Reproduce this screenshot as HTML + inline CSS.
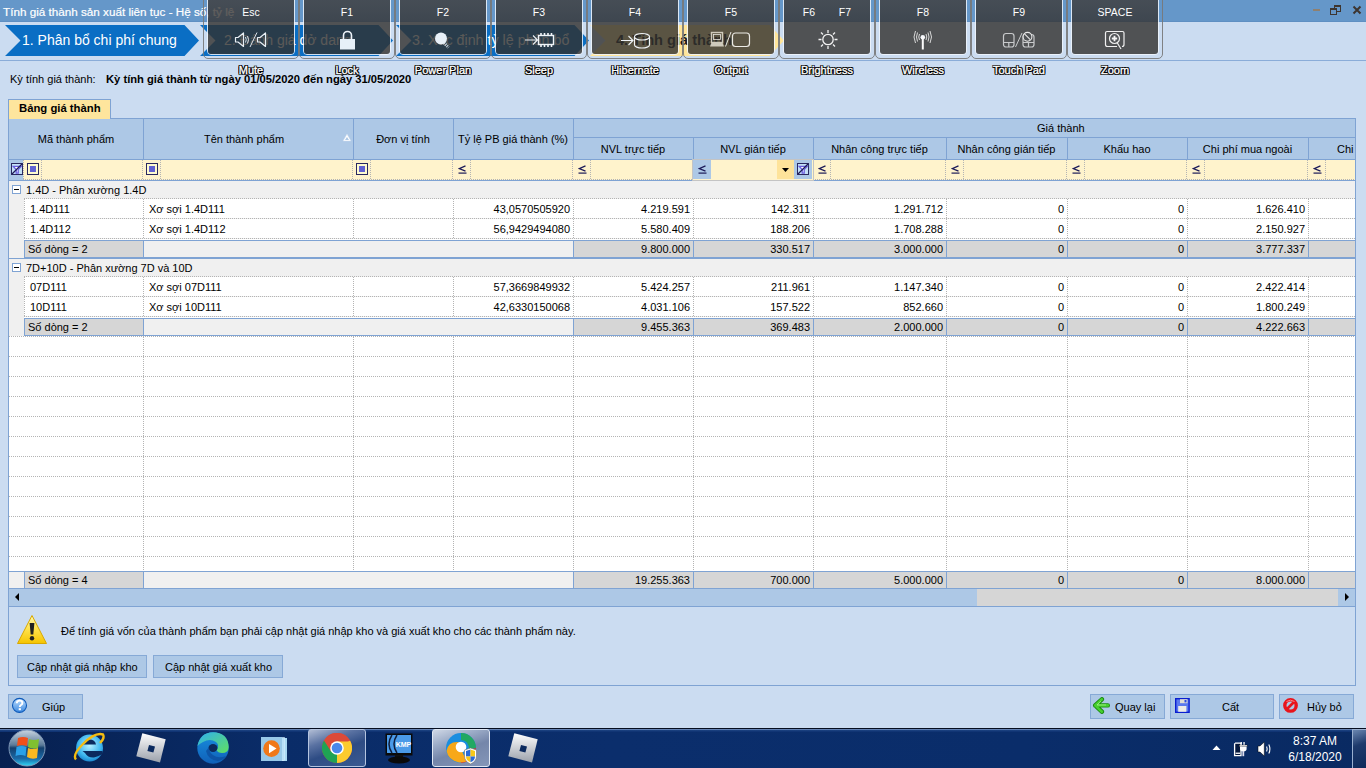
<!DOCTYPE html><html><head><meta charset="utf-8"><style>
html,body{margin:0;padding:0;}
body{width:1366px;height:768px;overflow:hidden;position:relative;background:#cbdcf1;font-family:"Liberation Sans", sans-serif;}
div{box-sizing:border-box;}
</style></head><body>
<div style="position:absolute;left:0px;top:0px;width:1366px;height:22px;background:#6597c9"></div>
<div style="position:absolute;left:0px;top:21px;width:1366px;height:1px;background:#5f8fc2"></div>
<div style="position:absolute;left:3px;top:6px;font-size:11.7px;line-height:11.7px;height:11.7px;color:#fff;font-weight:normal;white-space:nowrap;-webkit-text-stroke:0.2px #fff">Tính giá thành sản xuất liên tục - Hệ số, tỷ lệ</div>
<div style="position:absolute;left:1313px;top:9px;width:7px;height:2px;background:#8f8070"></div>
<div style="position:absolute;left:1334px;top:5px;width:7px;height:7px;border:1px solid #3d3530;border-top-width:2px"></div>
<div style="position:absolute;left:1330px;top:8px;width:7px;height:7px;border:1px solid #3d3530;border-top-width:2px;background:#6597c9"></div>
<svg style="position:absolute;left:1352px;top:5px" width="10" height="10"><path d="M1.5 1.5 L8.5 8.5 M8.5 1.5 L1.5 8.5" stroke="#3d3530" stroke-width="2"/></svg>
<svg style="position:absolute;left:0;top:0" width="1366" height="60"><polygon points="5,25 184.5,25 199,40.5 184.5,56 5,56 20.5,40.5" fill="#0a6ec4"/><polygon points="200,25 378.5,25 393,40.5 378.5,56 200,56 215.5,40.5" fill="#0a6ec4"/><polygon points="396,25 574.5,25 589,40.5 574.5,56 396,56 411.5,40.5" fill="#0a6ec4"/><polygon points="590,25 769.5,25 784,40.5 769.5,56 590,56 605.5,40.5" fill="#ffe59a"/></svg>
<div style="position:absolute;left:22px;top:33px;font-size:14px;line-height:14px;height:14px;color:#fff;font-weight:normal;white-space:nowrap;">1. Phân bổ chi phí chung</div>
<div style="position:absolute;left:224px;top:33px;font-size:14px;line-height:14px;height:14px;color:#fff;font-weight:normal;white-space:nowrap;">2. Đánh giá dở dang</div>
<div style="position:absolute;left:412px;top:33px;font-size:14.3px;line-height:14.3px;height:14.3px;color:#fff;font-weight:normal;white-space:nowrap;">3. Xác định tỷ lệ phân bổ</div>
<div style="position:absolute;left:616px;top:33px;font-size:14.6px;line-height:14.6px;height:14.6px;color:#1a1a1a;font-weight:bold;white-space:nowrap;">4. Tính giá thành</div>
<div style="position:absolute;left:0px;top:60px;width:1366px;height:1px;background:#8aacd8"></div>
<div style="position:absolute;left:10px;top:74px;font-size:11px;line-height:11px;height:11px;color:#000;font-weight:normal;white-space:nowrap;">Kỳ tính giá thành:</div>
<div style="position:absolute;left:106px;top:74px;font-size:11.2px;line-height:11.2px;height:11.2px;color:#000;font-weight:bold;white-space:nowrap;">Kỳ tính giá thành từ ngày 01/05/2020 đến ngày 31/05/2020</div>
<div style="position:absolute;left:8px;top:99px;width:103px;height:20px;background:#fee59d;border:1px solid #7fa3d3;border-bottom:none"></div>
<div style="position:absolute;left:19px;top:103px;font-size:11.3px;line-height:11.3px;height:11.3px;color:#000;font-weight:bold;white-space:nowrap;">Bảng giá thành</div>
<div style="position:absolute;left:8px;top:119px;width:1348px;height:567px;border:1px solid #7fa3d3;border-top:none"></div>
<div style="position:absolute;left:110px;top:118px;width:1246px;height:1px;background:#7fa3d3"></div>
<div style="position:absolute;left:9px;top:119px;width:1346px;height:40px;background:#adc8e6"></div>
<div style="position:absolute;left:143px;top:119px;width:1px;height:40px;background:#7fa3d3"></div>
<div style="position:absolute;left:353px;top:119px;width:1px;height:40px;background:#7fa3d3"></div>
<div style="position:absolute;left:453px;top:119px;width:1px;height:40px;background:#7fa3d3"></div>
<div style="position:absolute;left:573px;top:119px;width:1px;height:40px;background:#7fa3d3"></div>
<div style="position:absolute;left:573px;top:137px;width:782px;height:1px;background:#7fa3d3"></div>
<div style="position:absolute;left:693px;top:137px;width:1px;height:22px;background:#7fa3d3"></div>
<div style="position:absolute;left:813px;top:137px;width:1px;height:22px;background:#7fa3d3"></div>
<div style="position:absolute;left:946px;top:137px;width:1px;height:22px;background:#7fa3d3"></div>
<div style="position:absolute;left:1067px;top:137px;width:1px;height:22px;background:#7fa3d3"></div>
<div style="position:absolute;left:1187px;top:137px;width:1px;height:22px;background:#7fa3d3"></div>
<div style="position:absolute;left:1308px;top:137px;width:1px;height:22px;background:#7fa3d3"></div>
<div style="position:absolute;left:9px;top:159px;width:1346px;height:1px;background:#7fa3d3"></div>
<div style="position:absolute;left:9px;top:134px;width:134px;text-align:center;font-size:11px;line-height:11px;height:11px;color:#000;font-weight:normal;white-space:nowrap;">Mã thành phẩm</div>
<div style="position:absolute;left:143px;top:134px;width:202px;text-align:center;font-size:11px;line-height:11px;height:11px;color:#000;font-weight:normal;white-space:nowrap;">Tên thành phẩm</div>
<div style="position:absolute;left:353px;top:134px;width:100px;text-align:center;font-size:11px;line-height:11px;height:11px;color:#000;font-weight:normal;white-space:nowrap;">Đơn vị tính</div>
<div style="position:absolute;left:453px;top:134px;width:120px;text-align:center;font-size:11px;line-height:11px;height:11px;color:#000;font-weight:normal;white-space:nowrap;">Tỷ lệ PB giá thành (%)</div>
<div style="position:absolute;left:1037px;top:123px;font-size:11px;line-height:11px;height:11px;color:#000;font-weight:normal;white-space:nowrap;">Giá thành</div>
<div style="position:absolute;left:573px;top:144px;width:120px;text-align:center;font-size:11px;line-height:11px;height:11px;color:#000;font-weight:normal;white-space:nowrap;">NVL trực tiếp</div>
<div style="position:absolute;left:693px;top:144px;width:120px;text-align:center;font-size:11px;line-height:11px;height:11px;color:#000;font-weight:normal;white-space:nowrap;">NVL gián tiếp</div>
<div style="position:absolute;left:813px;top:144px;width:133px;text-align:center;font-size:11px;line-height:11px;height:11px;color:#000;font-weight:normal;white-space:nowrap;">Nhân công trực tiếp</div>
<div style="position:absolute;left:946px;top:144px;width:121px;text-align:center;font-size:11px;line-height:11px;height:11px;color:#000;font-weight:normal;white-space:nowrap;">Nhân công gián tiếp</div>
<div style="position:absolute;left:1067px;top:144px;width:120px;text-align:center;font-size:11px;line-height:11px;height:11px;color:#000;font-weight:normal;white-space:nowrap;">Khấu hao</div>
<div style="position:absolute;left:1187px;top:144px;width:121px;text-align:center;font-size:11px;line-height:11px;height:11px;color:#000;font-weight:normal;white-space:nowrap;">Chi phí mua ngoài</div>
<div style="position:absolute;left:1337px;top:144px;font-size:11px;line-height:11px;height:11px;color:#000;font-weight:normal;white-space:nowrap;">Chi</div>
<svg style="position:absolute;left:342px;top:133px" width="10" height="9"><polygon points="5,1 9,8 1,8" fill="#fff" stroke="#c8d8ec" stroke-width="0.5"/><polygon points="5,4 7,7 3,7" fill="#adc8e6"/></svg>
<div style="position:absolute;left:9px;top:160px;width:1346px;height:20px;background:#fff3cc"></div>
<div style="position:absolute;left:9px;top:160px;width:14px;height:20px;background:#adc8e6"></div>
<div style="position:absolute;left:9px;top:180px;width:1346px;height:1px;background:#7fa3d3"></div>
<div style="position:absolute;left:23px;top:179px;width:1332px;height:1px;background:repeating-linear-gradient(90deg,#b4b4b4 0 1px,transparent 1px 2px)"></div>
<svg style="position:absolute;left:11px;top:163px" width="12" height="12"><rect x="0.5" y="0.5" width="11" height="11" fill="#c4e0f6" stroke="#2a2860"/><path d="M2.2 3.4 H10.2 L7.2 6.6 V10.2 H5.2 V6.6 Z" fill="#fff" stroke="#6a5ee0" stroke-width="1.3"/><path d="M1 11 L11 1" stroke="#1c1a58" stroke-width="1.2"/></svg>
<div style="position:absolute;left:27px;top:163px;width:12px;height:12px;border:1px solid #2a2860;background:#fffbd0"></div>
<div style="position:absolute;left:30px;top:166px;width:6px;height:6px;background:#6262d2"></div>
<div style="position:absolute;left:41px;top:160px;width:1px;height:19px;background:repeating-linear-gradient(180deg,#b4b4b4 0 1px,transparent 1px 2px)"></div>
<div style="position:absolute;left:23px;top:160px;width:1px;height:19px;background:repeating-linear-gradient(180deg,#b4b4b4 0 1px,transparent 1px 2px)"></div>
<div style="position:absolute;left:142px;top:160px;width:1px;height:19px;background:repeating-linear-gradient(180deg,#b4b4b4 0 1px,transparent 1px 2px)"></div>
<div style="position:absolute;left:146px;top:163px;width:12px;height:12px;border:1px solid #2a2860;background:#fffbd0"></div>
<div style="position:absolute;left:149px;top:166px;width:6px;height:6px;background:#6262d2"></div>
<div style="position:absolute;left:160px;top:160px;width:1px;height:19px;background:repeating-linear-gradient(180deg,#b4b4b4 0 1px,transparent 1px 2px)"></div>
<div style="position:absolute;left:352px;top:160px;width:1px;height:19px;background:repeating-linear-gradient(180deg,#b4b4b4 0 1px,transparent 1px 2px)"></div>
<div style="position:absolute;left:356px;top:163px;width:12px;height:12px;border:1px solid #2a2860;background:#fffbd0"></div>
<div style="position:absolute;left:359px;top:166px;width:6px;height:6px;background:#6262d2"></div>
<div style="position:absolute;left:370px;top:160px;width:1px;height:19px;background:repeating-linear-gradient(180deg,#b4b4b4 0 1px,transparent 1px 2px)"></div>
<div style="position:absolute;left:452px;top:160px;width:1px;height:19px;background:repeating-linear-gradient(180deg,#b4b4b4 0 1px,transparent 1px 2px)"></div>
<svg style="position:absolute;left:458px;top:165px" width="9" height="9"><path d="M7.5 0.8 L1.2 3.6 L7.5 6.2" fill="none" stroke="#1c1a58" stroke-width="1.3"/><rect x="0.5" y="7.5" width="8" height="1.2" fill="#1c1a58"/></svg>
<div style="position:absolute;left:470px;top:160px;width:1px;height:19px;background:repeating-linear-gradient(180deg,#b4b4b4 0 1px,transparent 1px 2px)"></div>
<div style="position:absolute;left:572px;top:160px;width:1px;height:19px;background:repeating-linear-gradient(180deg,#b4b4b4 0 1px,transparent 1px 2px)"></div>
<svg style="position:absolute;left:578px;top:165px" width="9" height="9"><path d="M7.5 0.8 L1.2 3.6 L7.5 6.2" fill="none" stroke="#1c1a58" stroke-width="1.3"/><rect x="0.5" y="7.5" width="8" height="1.2" fill="#1c1a58"/></svg>
<div style="position:absolute;left:590px;top:160px;width:1px;height:19px;background:repeating-linear-gradient(180deg,#b4b4b4 0 1px,transparent 1px 2px)"></div>
<div style="position:absolute;left:812px;top:160px;width:1px;height:19px;background:repeating-linear-gradient(180deg,#b4b4b4 0 1px,transparent 1px 2px)"></div>
<svg style="position:absolute;left:818px;top:165px" width="9" height="9"><path d="M7.5 0.8 L1.2 3.6 L7.5 6.2" fill="none" stroke="#1c1a58" stroke-width="1.3"/><rect x="0.5" y="7.5" width="8" height="1.2" fill="#1c1a58"/></svg>
<div style="position:absolute;left:830px;top:160px;width:1px;height:19px;background:repeating-linear-gradient(180deg,#b4b4b4 0 1px,transparent 1px 2px)"></div>
<div style="position:absolute;left:945px;top:160px;width:1px;height:19px;background:repeating-linear-gradient(180deg,#b4b4b4 0 1px,transparent 1px 2px)"></div>
<svg style="position:absolute;left:951px;top:165px" width="9" height="9"><path d="M7.5 0.8 L1.2 3.6 L7.5 6.2" fill="none" stroke="#1c1a58" stroke-width="1.3"/><rect x="0.5" y="7.5" width="8" height="1.2" fill="#1c1a58"/></svg>
<div style="position:absolute;left:963px;top:160px;width:1px;height:19px;background:repeating-linear-gradient(180deg,#b4b4b4 0 1px,transparent 1px 2px)"></div>
<div style="position:absolute;left:1066px;top:160px;width:1px;height:19px;background:repeating-linear-gradient(180deg,#b4b4b4 0 1px,transparent 1px 2px)"></div>
<svg style="position:absolute;left:1072px;top:165px" width="9" height="9"><path d="M7.5 0.8 L1.2 3.6 L7.5 6.2" fill="none" stroke="#1c1a58" stroke-width="1.3"/><rect x="0.5" y="7.5" width="8" height="1.2" fill="#1c1a58"/></svg>
<div style="position:absolute;left:1084px;top:160px;width:1px;height:19px;background:repeating-linear-gradient(180deg,#b4b4b4 0 1px,transparent 1px 2px)"></div>
<div style="position:absolute;left:1186px;top:160px;width:1px;height:19px;background:repeating-linear-gradient(180deg,#b4b4b4 0 1px,transparent 1px 2px)"></div>
<svg style="position:absolute;left:1192px;top:165px" width="9" height="9"><path d="M7.5 0.8 L1.2 3.6 L7.5 6.2" fill="none" stroke="#1c1a58" stroke-width="1.3"/><rect x="0.5" y="7.5" width="8" height="1.2" fill="#1c1a58"/></svg>
<div style="position:absolute;left:1204px;top:160px;width:1px;height:19px;background:repeating-linear-gradient(180deg,#b4b4b4 0 1px,transparent 1px 2px)"></div>
<div style="position:absolute;left:1307px;top:160px;width:1px;height:19px;background:repeating-linear-gradient(180deg,#b4b4b4 0 1px,transparent 1px 2px)"></div>
<svg style="position:absolute;left:1313px;top:165px" width="9" height="9"><path d="M7.5 0.8 L1.2 3.6 L7.5 6.2" fill="none" stroke="#1c1a58" stroke-width="1.3"/><rect x="0.5" y="7.5" width="8" height="1.2" fill="#1c1a58"/></svg>
<div style="position:absolute;left:1325px;top:160px;width:1px;height:19px;background:repeating-linear-gradient(180deg,#b4b4b4 0 1px,transparent 1px 2px)"></div>
<div style="position:absolute;left:692px;top:159px;width:122px;height:22px;border:1px solid #c4c4c4;background:#fff3cc"></div>
<div style="position:absolute;left:693px;top:160px;width:18px;height:19px;background:#adc8e6"></div>
<svg style="position:absolute;left:698px;top:165px" width="9" height="9"><path d="M7.5 0.8 L1.2 3.6 L7.5 6.2" fill="none" stroke="#1c1a58" stroke-width="1.3"/><rect x="0.5" y="7.5" width="8" height="1.2" fill="#1c1a58"/></svg>
<div style="position:absolute;left:777px;top:160px;width:17px;height:19px;background:#fee39a"></div>
<svg style="position:absolute;left:782px;top:168px" width="7" height="4"><polygon points="0,0 7,0 3.5,4" fill="#000"/></svg>
<div style="position:absolute;left:794px;top:160px;width:18px;height:19px;background:#adc8e6"></div>
<svg style="position:absolute;left:797px;top:163px" width="12" height="12"><rect x="0.5" y="0.5" width="11" height="11" fill="#c4e0f6" stroke="#2a2860"/><path d="M2.2 3.4 H10.2 L7.2 6.6 V10.2 H5.2 V6.6 Z" fill="#fff" stroke="#6a5ee0" stroke-width="1.3"/><path d="M1 11 L11 1" stroke="#1c1a58" stroke-width="1.2"/></svg>
<div style="position:absolute;left:812px;top:160px;width:1px;height:19px;background:repeating-linear-gradient(180deg,#fff7c8 0 1px,transparent 1px 2px)"></div>
<div style="position:absolute;left:9px;top:181px;width:1346px;height:390px;background:#f0f0f0"></div>
<div style="position:absolute;left:12px;top:185px;width:9px;height:9px;border:1px solid #7fa3d3;background:#fff"></div>
<div style="position:absolute;left:14px;top:189px;width:5px;height:1px;background:#000"></div>
<div style="position:absolute;left:26px;top:185px;font-size:11px;line-height:11px;height:11px;color:#000;font-weight:normal;white-space:nowrap;">1.4D - Phân xường 1.4D</div>
<div style="position:absolute;left:24px;top:198px;width:1331px;height:1px;background:repeating-linear-gradient(90deg,#b4b4b4 0 1px,transparent 1px 2px)"></div>
<div style="position:absolute;left:24px;top:199px;width:1331px;height:19px;background:#fff"></div>
<div style="position:absolute;left:24px;top:218px;width:1331px;height:1px;background:repeating-linear-gradient(90deg,#b4b4b4 0 1px,transparent 1px 2px)"></div>
<div style="position:absolute;left:143px;top:199px;width:1px;height:19px;background:repeating-linear-gradient(180deg,#b4b4b4 0 1px,transparent 1px 2px)"></div>
<div style="position:absolute;left:353px;top:199px;width:1px;height:19px;background:repeating-linear-gradient(180deg,#b4b4b4 0 1px,transparent 1px 2px)"></div>
<div style="position:absolute;left:453px;top:199px;width:1px;height:19px;background:repeating-linear-gradient(180deg,#b4b4b4 0 1px,transparent 1px 2px)"></div>
<div style="position:absolute;left:573px;top:199px;width:1px;height:19px;background:repeating-linear-gradient(180deg,#b4b4b4 0 1px,transparent 1px 2px)"></div>
<div style="position:absolute;left:693px;top:199px;width:1px;height:19px;background:repeating-linear-gradient(180deg,#b4b4b4 0 1px,transparent 1px 2px)"></div>
<div style="position:absolute;left:813px;top:199px;width:1px;height:19px;background:repeating-linear-gradient(180deg,#b4b4b4 0 1px,transparent 1px 2px)"></div>
<div style="position:absolute;left:946px;top:199px;width:1px;height:19px;background:repeating-linear-gradient(180deg,#b4b4b4 0 1px,transparent 1px 2px)"></div>
<div style="position:absolute;left:1067px;top:199px;width:1px;height:19px;background:repeating-linear-gradient(180deg,#b4b4b4 0 1px,transparent 1px 2px)"></div>
<div style="position:absolute;left:1187px;top:199px;width:1px;height:19px;background:repeating-linear-gradient(180deg,#b4b4b4 0 1px,transparent 1px 2px)"></div>
<div style="position:absolute;left:1308px;top:199px;width:1px;height:19px;background:repeating-linear-gradient(180deg,#b4b4b4 0 1px,transparent 1px 2px)"></div>
<div style="position:absolute;left:24px;top:199px;width:1px;height:19px;background:repeating-linear-gradient(180deg,#b4b4b4 0 1px,transparent 1px 2px)"></div>
<div style="position:absolute;left:30px;top:204px;font-size:11px;line-height:11px;height:11px;color:#000;font-weight:normal;white-space:nowrap;">1.4D111</div>
<div style="position:absolute;left:149px;top:204px;font-size:11px;line-height:11px;height:11px;color:#000;font-weight:normal;white-space:nowrap;">Xơ sợi 1.4D111</div>
<div style="position:absolute;left:270px;top:204px;width:300px;text-align:right;font-size:11px;line-height:11px;height:11px;color:#000;font-weight:normal;white-space:nowrap;">43,0570505920</div>
<div style="position:absolute;left:390px;top:204px;width:300px;text-align:right;font-size:11px;line-height:11px;height:11px;color:#000;font-weight:normal;white-space:nowrap;">4.219.591</div>
<div style="position:absolute;left:510px;top:204px;width:300px;text-align:right;font-size:11px;line-height:11px;height:11px;color:#000;font-weight:normal;white-space:nowrap;">142.311</div>
<div style="position:absolute;left:643px;top:204px;width:300px;text-align:right;font-size:11px;line-height:11px;height:11px;color:#000;font-weight:normal;white-space:nowrap;">1.291.712</div>
<div style="position:absolute;left:764px;top:204px;width:300px;text-align:right;font-size:11px;line-height:11px;height:11px;color:#000;font-weight:normal;white-space:nowrap;">0</div>
<div style="position:absolute;left:884px;top:204px;width:300px;text-align:right;font-size:11px;line-height:11px;height:11px;color:#000;font-weight:normal;white-space:nowrap;">0</div>
<div style="position:absolute;left:1005px;top:204px;width:300px;text-align:right;font-size:11px;line-height:11px;height:11px;color:#000;font-weight:normal;white-space:nowrap;">1.626.410</div>
<div style="position:absolute;left:24px;top:219px;width:1331px;height:19px;background:#fff"></div>
<div style="position:absolute;left:24px;top:238px;width:1331px;height:1px;background:repeating-linear-gradient(90deg,#b4b4b4 0 1px,transparent 1px 2px)"></div>
<div style="position:absolute;left:143px;top:219px;width:1px;height:19px;background:repeating-linear-gradient(180deg,#b4b4b4 0 1px,transparent 1px 2px)"></div>
<div style="position:absolute;left:353px;top:219px;width:1px;height:19px;background:repeating-linear-gradient(180deg,#b4b4b4 0 1px,transparent 1px 2px)"></div>
<div style="position:absolute;left:453px;top:219px;width:1px;height:19px;background:repeating-linear-gradient(180deg,#b4b4b4 0 1px,transparent 1px 2px)"></div>
<div style="position:absolute;left:573px;top:219px;width:1px;height:19px;background:repeating-linear-gradient(180deg,#b4b4b4 0 1px,transparent 1px 2px)"></div>
<div style="position:absolute;left:693px;top:219px;width:1px;height:19px;background:repeating-linear-gradient(180deg,#b4b4b4 0 1px,transparent 1px 2px)"></div>
<div style="position:absolute;left:813px;top:219px;width:1px;height:19px;background:repeating-linear-gradient(180deg,#b4b4b4 0 1px,transparent 1px 2px)"></div>
<div style="position:absolute;left:946px;top:219px;width:1px;height:19px;background:repeating-linear-gradient(180deg,#b4b4b4 0 1px,transparent 1px 2px)"></div>
<div style="position:absolute;left:1067px;top:219px;width:1px;height:19px;background:repeating-linear-gradient(180deg,#b4b4b4 0 1px,transparent 1px 2px)"></div>
<div style="position:absolute;left:1187px;top:219px;width:1px;height:19px;background:repeating-linear-gradient(180deg,#b4b4b4 0 1px,transparent 1px 2px)"></div>
<div style="position:absolute;left:1308px;top:219px;width:1px;height:19px;background:repeating-linear-gradient(180deg,#b4b4b4 0 1px,transparent 1px 2px)"></div>
<div style="position:absolute;left:24px;top:219px;width:1px;height:19px;background:repeating-linear-gradient(180deg,#b4b4b4 0 1px,transparent 1px 2px)"></div>
<div style="position:absolute;left:30px;top:224px;font-size:11px;line-height:11px;height:11px;color:#000;font-weight:normal;white-space:nowrap;">1.4D112</div>
<div style="position:absolute;left:149px;top:224px;font-size:11px;line-height:11px;height:11px;color:#000;font-weight:normal;white-space:nowrap;">Xơ sợi 1.4D112</div>
<div style="position:absolute;left:270px;top:224px;width:300px;text-align:right;font-size:11px;line-height:11px;height:11px;color:#000;font-weight:normal;white-space:nowrap;">56,9429494080</div>
<div style="position:absolute;left:390px;top:224px;width:300px;text-align:right;font-size:11px;line-height:11px;height:11px;color:#000;font-weight:normal;white-space:nowrap;">5.580.409</div>
<div style="position:absolute;left:510px;top:224px;width:300px;text-align:right;font-size:11px;line-height:11px;height:11px;color:#000;font-weight:normal;white-space:nowrap;">188.206</div>
<div style="position:absolute;left:643px;top:224px;width:300px;text-align:right;font-size:11px;line-height:11px;height:11px;color:#000;font-weight:normal;white-space:nowrap;">1.708.288</div>
<div style="position:absolute;left:764px;top:224px;width:300px;text-align:right;font-size:11px;line-height:11px;height:11px;color:#000;font-weight:normal;white-space:nowrap;">0</div>
<div style="position:absolute;left:884px;top:224px;width:300px;text-align:right;font-size:11px;line-height:11px;height:11px;color:#000;font-weight:normal;white-space:nowrap;">0</div>
<div style="position:absolute;left:1005px;top:224px;width:300px;text-align:right;font-size:11px;line-height:11px;height:11px;color:#000;font-weight:normal;white-space:nowrap;">2.150.927</div>
<div style="position:absolute;left:24px;top:239px;width:1331px;height:1px;background:#fff"></div>
<div style="position:absolute;left:24px;top:240px;width:1331px;height:1px;background:#7fa3d3"></div>
<div style="position:absolute;left:24px;top:241px;width:119px;height:16px;background:#d6d6d6"></div>
<div style="position:absolute;left:24px;top:240px;width:1px;height:17px;background:#7fa3d3"></div>
<div style="position:absolute;left:143px;top:240px;width:1px;height:17px;background:#7fa3d3"></div>
<div style="position:absolute;left:574px;top:241px;width:119px;height:16px;background:#d6d6d6"></div>
<div style="position:absolute;left:573px;top:240px;width:1px;height:17px;background:#7fa3d3"></div>
<div style="position:absolute;left:694px;top:241px;width:119px;height:16px;background:#d6d6d6"></div>
<div style="position:absolute;left:693px;top:240px;width:1px;height:17px;background:#7fa3d3"></div>
<div style="position:absolute;left:814px;top:241px;width:132px;height:16px;background:#d6d6d6"></div>
<div style="position:absolute;left:813px;top:240px;width:1px;height:17px;background:#7fa3d3"></div>
<div style="position:absolute;left:947px;top:241px;width:120px;height:16px;background:#d6d6d6"></div>
<div style="position:absolute;left:946px;top:240px;width:1px;height:17px;background:#7fa3d3"></div>
<div style="position:absolute;left:1068px;top:241px;width:119px;height:16px;background:#d6d6d6"></div>
<div style="position:absolute;left:1067px;top:240px;width:1px;height:17px;background:#7fa3d3"></div>
<div style="position:absolute;left:1188px;top:241px;width:120px;height:16px;background:#d6d6d6"></div>
<div style="position:absolute;left:1187px;top:240px;width:1px;height:17px;background:#7fa3d3"></div>
<div style="position:absolute;left:1309px;top:241px;width:46px;height:16px;background:#d6d6d6"></div>
<div style="position:absolute;left:1308px;top:240px;width:1px;height:17px;background:#7fa3d3"></div>
<div style="position:absolute;left:24px;top:257px;width:1331px;height:1px;background:#7fa3d3"></div>
<div style="position:absolute;left:9px;top:258px;width:1346px;height:1px;background:#7fa3d3"></div>
<div style="position:absolute;left:28px;top:244px;font-size:11px;line-height:11px;height:11px;color:#000;font-weight:normal;white-space:nowrap;">Số dòng = 2</div>
<div style="position:absolute;left:390px;top:244px;width:300px;text-align:right;font-size:11px;line-height:11px;height:11px;color:#000;font-weight:normal;white-space:nowrap;">9.800.000</div>
<div style="position:absolute;left:510px;top:244px;width:300px;text-align:right;font-size:11px;line-height:11px;height:11px;color:#000;font-weight:normal;white-space:nowrap;">330.517</div>
<div style="position:absolute;left:643px;top:244px;width:300px;text-align:right;font-size:11px;line-height:11px;height:11px;color:#000;font-weight:normal;white-space:nowrap;">3.000.000</div>
<div style="position:absolute;left:764px;top:244px;width:300px;text-align:right;font-size:11px;line-height:11px;height:11px;color:#000;font-weight:normal;white-space:nowrap;">0</div>
<div style="position:absolute;left:884px;top:244px;width:300px;text-align:right;font-size:11px;line-height:11px;height:11px;color:#000;font-weight:normal;white-space:nowrap;">0</div>
<div style="position:absolute;left:1005px;top:244px;width:300px;text-align:right;font-size:11px;line-height:11px;height:11px;color:#000;font-weight:normal;white-space:nowrap;">3.777.337</div>
<div style="position:absolute;left:12px;top:263px;width:9px;height:9px;border:1px solid #7fa3d3;background:#fff"></div>
<div style="position:absolute;left:14px;top:267px;width:5px;height:1px;background:#000"></div>
<div style="position:absolute;left:26px;top:263px;font-size:11px;line-height:11px;height:11px;color:#000;font-weight:normal;white-space:nowrap;">7D+10D - Phân xường 7D và 10D</div>
<div style="position:absolute;left:24px;top:276px;width:1331px;height:1px;background:repeating-linear-gradient(90deg,#b4b4b4 0 1px,transparent 1px 2px)"></div>
<div style="position:absolute;left:24px;top:277px;width:1331px;height:19px;background:#fff"></div>
<div style="position:absolute;left:24px;top:296px;width:1331px;height:1px;background:repeating-linear-gradient(90deg,#b4b4b4 0 1px,transparent 1px 2px)"></div>
<div style="position:absolute;left:143px;top:277px;width:1px;height:19px;background:repeating-linear-gradient(180deg,#b4b4b4 0 1px,transparent 1px 2px)"></div>
<div style="position:absolute;left:353px;top:277px;width:1px;height:19px;background:repeating-linear-gradient(180deg,#b4b4b4 0 1px,transparent 1px 2px)"></div>
<div style="position:absolute;left:453px;top:277px;width:1px;height:19px;background:repeating-linear-gradient(180deg,#b4b4b4 0 1px,transparent 1px 2px)"></div>
<div style="position:absolute;left:573px;top:277px;width:1px;height:19px;background:repeating-linear-gradient(180deg,#b4b4b4 0 1px,transparent 1px 2px)"></div>
<div style="position:absolute;left:693px;top:277px;width:1px;height:19px;background:repeating-linear-gradient(180deg,#b4b4b4 0 1px,transparent 1px 2px)"></div>
<div style="position:absolute;left:813px;top:277px;width:1px;height:19px;background:repeating-linear-gradient(180deg,#b4b4b4 0 1px,transparent 1px 2px)"></div>
<div style="position:absolute;left:946px;top:277px;width:1px;height:19px;background:repeating-linear-gradient(180deg,#b4b4b4 0 1px,transparent 1px 2px)"></div>
<div style="position:absolute;left:1067px;top:277px;width:1px;height:19px;background:repeating-linear-gradient(180deg,#b4b4b4 0 1px,transparent 1px 2px)"></div>
<div style="position:absolute;left:1187px;top:277px;width:1px;height:19px;background:repeating-linear-gradient(180deg,#b4b4b4 0 1px,transparent 1px 2px)"></div>
<div style="position:absolute;left:1308px;top:277px;width:1px;height:19px;background:repeating-linear-gradient(180deg,#b4b4b4 0 1px,transparent 1px 2px)"></div>
<div style="position:absolute;left:24px;top:277px;width:1px;height:19px;background:repeating-linear-gradient(180deg,#b4b4b4 0 1px,transparent 1px 2px)"></div>
<div style="position:absolute;left:30px;top:282px;font-size:11px;line-height:11px;height:11px;color:#000;font-weight:normal;white-space:nowrap;">07D111</div>
<div style="position:absolute;left:149px;top:282px;font-size:11px;line-height:11px;height:11px;color:#000;font-weight:normal;white-space:nowrap;">Xơ sợi 07D111</div>
<div style="position:absolute;left:270px;top:282px;width:300px;text-align:right;font-size:11px;line-height:11px;height:11px;color:#000;font-weight:normal;white-space:nowrap;">57,3669849932</div>
<div style="position:absolute;left:390px;top:282px;width:300px;text-align:right;font-size:11px;line-height:11px;height:11px;color:#000;font-weight:normal;white-space:nowrap;">5.424.257</div>
<div style="position:absolute;left:510px;top:282px;width:300px;text-align:right;font-size:11px;line-height:11px;height:11px;color:#000;font-weight:normal;white-space:nowrap;">211.961</div>
<div style="position:absolute;left:643px;top:282px;width:300px;text-align:right;font-size:11px;line-height:11px;height:11px;color:#000;font-weight:normal;white-space:nowrap;">1.147.340</div>
<div style="position:absolute;left:764px;top:282px;width:300px;text-align:right;font-size:11px;line-height:11px;height:11px;color:#000;font-weight:normal;white-space:nowrap;">0</div>
<div style="position:absolute;left:884px;top:282px;width:300px;text-align:right;font-size:11px;line-height:11px;height:11px;color:#000;font-weight:normal;white-space:nowrap;">0</div>
<div style="position:absolute;left:1005px;top:282px;width:300px;text-align:right;font-size:11px;line-height:11px;height:11px;color:#000;font-weight:normal;white-space:nowrap;">2.422.414</div>
<div style="position:absolute;left:24px;top:297px;width:1331px;height:19px;background:#fff"></div>
<div style="position:absolute;left:24px;top:316px;width:1331px;height:1px;background:repeating-linear-gradient(90deg,#b4b4b4 0 1px,transparent 1px 2px)"></div>
<div style="position:absolute;left:143px;top:297px;width:1px;height:19px;background:repeating-linear-gradient(180deg,#b4b4b4 0 1px,transparent 1px 2px)"></div>
<div style="position:absolute;left:353px;top:297px;width:1px;height:19px;background:repeating-linear-gradient(180deg,#b4b4b4 0 1px,transparent 1px 2px)"></div>
<div style="position:absolute;left:453px;top:297px;width:1px;height:19px;background:repeating-linear-gradient(180deg,#b4b4b4 0 1px,transparent 1px 2px)"></div>
<div style="position:absolute;left:573px;top:297px;width:1px;height:19px;background:repeating-linear-gradient(180deg,#b4b4b4 0 1px,transparent 1px 2px)"></div>
<div style="position:absolute;left:693px;top:297px;width:1px;height:19px;background:repeating-linear-gradient(180deg,#b4b4b4 0 1px,transparent 1px 2px)"></div>
<div style="position:absolute;left:813px;top:297px;width:1px;height:19px;background:repeating-linear-gradient(180deg,#b4b4b4 0 1px,transparent 1px 2px)"></div>
<div style="position:absolute;left:946px;top:297px;width:1px;height:19px;background:repeating-linear-gradient(180deg,#b4b4b4 0 1px,transparent 1px 2px)"></div>
<div style="position:absolute;left:1067px;top:297px;width:1px;height:19px;background:repeating-linear-gradient(180deg,#b4b4b4 0 1px,transparent 1px 2px)"></div>
<div style="position:absolute;left:1187px;top:297px;width:1px;height:19px;background:repeating-linear-gradient(180deg,#b4b4b4 0 1px,transparent 1px 2px)"></div>
<div style="position:absolute;left:1308px;top:297px;width:1px;height:19px;background:repeating-linear-gradient(180deg,#b4b4b4 0 1px,transparent 1px 2px)"></div>
<div style="position:absolute;left:24px;top:297px;width:1px;height:19px;background:repeating-linear-gradient(180deg,#b4b4b4 0 1px,transparent 1px 2px)"></div>
<div style="position:absolute;left:30px;top:302px;font-size:11px;line-height:11px;height:11px;color:#000;font-weight:normal;white-space:nowrap;">10D111</div>
<div style="position:absolute;left:149px;top:302px;font-size:11px;line-height:11px;height:11px;color:#000;font-weight:normal;white-space:nowrap;">Xơ sợi 10D111</div>
<div style="position:absolute;left:270px;top:302px;width:300px;text-align:right;font-size:11px;line-height:11px;height:11px;color:#000;font-weight:normal;white-space:nowrap;">42,6330150068</div>
<div style="position:absolute;left:390px;top:302px;width:300px;text-align:right;font-size:11px;line-height:11px;height:11px;color:#000;font-weight:normal;white-space:nowrap;">4.031.106</div>
<div style="position:absolute;left:510px;top:302px;width:300px;text-align:right;font-size:11px;line-height:11px;height:11px;color:#000;font-weight:normal;white-space:nowrap;">157.522</div>
<div style="position:absolute;left:643px;top:302px;width:300px;text-align:right;font-size:11px;line-height:11px;height:11px;color:#000;font-weight:normal;white-space:nowrap;">852.660</div>
<div style="position:absolute;left:764px;top:302px;width:300px;text-align:right;font-size:11px;line-height:11px;height:11px;color:#000;font-weight:normal;white-space:nowrap;">0</div>
<div style="position:absolute;left:884px;top:302px;width:300px;text-align:right;font-size:11px;line-height:11px;height:11px;color:#000;font-weight:normal;white-space:nowrap;">0</div>
<div style="position:absolute;left:1005px;top:302px;width:300px;text-align:right;font-size:11px;line-height:11px;height:11px;color:#000;font-weight:normal;white-space:nowrap;">1.800.249</div>
<div style="position:absolute;left:24px;top:317px;width:1331px;height:1px;background:#fff"></div>
<div style="position:absolute;left:24px;top:318px;width:1331px;height:1px;background:#7fa3d3"></div>
<div style="position:absolute;left:24px;top:319px;width:119px;height:16px;background:#d6d6d6"></div>
<div style="position:absolute;left:24px;top:318px;width:1px;height:17px;background:#7fa3d3"></div>
<div style="position:absolute;left:143px;top:318px;width:1px;height:17px;background:#7fa3d3"></div>
<div style="position:absolute;left:574px;top:319px;width:119px;height:16px;background:#d6d6d6"></div>
<div style="position:absolute;left:573px;top:318px;width:1px;height:17px;background:#7fa3d3"></div>
<div style="position:absolute;left:694px;top:319px;width:119px;height:16px;background:#d6d6d6"></div>
<div style="position:absolute;left:693px;top:318px;width:1px;height:17px;background:#7fa3d3"></div>
<div style="position:absolute;left:814px;top:319px;width:132px;height:16px;background:#d6d6d6"></div>
<div style="position:absolute;left:813px;top:318px;width:1px;height:17px;background:#7fa3d3"></div>
<div style="position:absolute;left:947px;top:319px;width:120px;height:16px;background:#d6d6d6"></div>
<div style="position:absolute;left:946px;top:318px;width:1px;height:17px;background:#7fa3d3"></div>
<div style="position:absolute;left:1068px;top:319px;width:119px;height:16px;background:#d6d6d6"></div>
<div style="position:absolute;left:1067px;top:318px;width:1px;height:17px;background:#7fa3d3"></div>
<div style="position:absolute;left:1188px;top:319px;width:120px;height:16px;background:#d6d6d6"></div>
<div style="position:absolute;left:1187px;top:318px;width:1px;height:17px;background:#7fa3d3"></div>
<div style="position:absolute;left:1309px;top:319px;width:46px;height:16px;background:#d6d6d6"></div>
<div style="position:absolute;left:1308px;top:318px;width:1px;height:17px;background:#7fa3d3"></div>
<div style="position:absolute;left:24px;top:335px;width:1331px;height:1px;background:#7fa3d3"></div>
<div style="position:absolute;left:28px;top:322px;font-size:11px;line-height:11px;height:11px;color:#000;font-weight:normal;white-space:nowrap;">Số dòng = 2</div>
<div style="position:absolute;left:390px;top:322px;width:300px;text-align:right;font-size:11px;line-height:11px;height:11px;color:#000;font-weight:normal;white-space:nowrap;">9.455.363</div>
<div style="position:absolute;left:510px;top:322px;width:300px;text-align:right;font-size:11px;line-height:11px;height:11px;color:#000;font-weight:normal;white-space:nowrap;">369.483</div>
<div style="position:absolute;left:643px;top:322px;width:300px;text-align:right;font-size:11px;line-height:11px;height:11px;color:#000;font-weight:normal;white-space:nowrap;">2.000.000</div>
<div style="position:absolute;left:764px;top:322px;width:300px;text-align:right;font-size:11px;line-height:11px;height:11px;color:#000;font-weight:normal;white-space:nowrap;">0</div>
<div style="position:absolute;left:884px;top:322px;width:300px;text-align:right;font-size:11px;line-height:11px;height:11px;color:#000;font-weight:normal;white-space:nowrap;">0</div>
<div style="position:absolute;left:1005px;top:322px;width:300px;text-align:right;font-size:11px;line-height:11px;height:11px;color:#000;font-weight:normal;white-space:nowrap;">4.222.663</div>
<div style="position:absolute;left:9px;top:336px;width:1346px;height:235px;background:#fff"></div>
<div style="position:absolute;left:9px;top:336px;width:1346px;height:1px;background:repeating-linear-gradient(90deg,#b4b4b4 0 1px,transparent 1px 2px)"></div>
<div style="position:absolute;left:9px;top:356px;width:1346px;height:1px;background:repeating-linear-gradient(90deg,#b4b4b4 0 1px,transparent 1px 2px)"></div>
<div style="position:absolute;left:9px;top:376px;width:1346px;height:1px;background:repeating-linear-gradient(90deg,#b4b4b4 0 1px,transparent 1px 2px)"></div>
<div style="position:absolute;left:9px;top:396px;width:1346px;height:1px;background:repeating-linear-gradient(90deg,#b4b4b4 0 1px,transparent 1px 2px)"></div>
<div style="position:absolute;left:9px;top:416px;width:1346px;height:1px;background:repeating-linear-gradient(90deg,#b4b4b4 0 1px,transparent 1px 2px)"></div>
<div style="position:absolute;left:9px;top:436px;width:1346px;height:1px;background:repeating-linear-gradient(90deg,#b4b4b4 0 1px,transparent 1px 2px)"></div>
<div style="position:absolute;left:9px;top:456px;width:1346px;height:1px;background:repeating-linear-gradient(90deg,#b4b4b4 0 1px,transparent 1px 2px)"></div>
<div style="position:absolute;left:9px;top:476px;width:1346px;height:1px;background:repeating-linear-gradient(90deg,#b4b4b4 0 1px,transparent 1px 2px)"></div>
<div style="position:absolute;left:9px;top:496px;width:1346px;height:1px;background:repeating-linear-gradient(90deg,#b4b4b4 0 1px,transparent 1px 2px)"></div>
<div style="position:absolute;left:9px;top:516px;width:1346px;height:1px;background:repeating-linear-gradient(90deg,#b4b4b4 0 1px,transparent 1px 2px)"></div>
<div style="position:absolute;left:9px;top:536px;width:1346px;height:1px;background:repeating-linear-gradient(90deg,#b4b4b4 0 1px,transparent 1px 2px)"></div>
<div style="position:absolute;left:9px;top:556px;width:1346px;height:1px;background:repeating-linear-gradient(90deg,#b4b4b4 0 1px,transparent 1px 2px)"></div>
<div style="position:absolute;left:143px;top:337px;width:1px;height:234px;background:repeating-linear-gradient(180deg,#b4b4b4 0 1px,transparent 1px 2px)"></div>
<div style="position:absolute;left:353px;top:337px;width:1px;height:234px;background:repeating-linear-gradient(180deg,#b4b4b4 0 1px,transparent 1px 2px)"></div>
<div style="position:absolute;left:453px;top:337px;width:1px;height:234px;background:repeating-linear-gradient(180deg,#b4b4b4 0 1px,transparent 1px 2px)"></div>
<div style="position:absolute;left:573px;top:337px;width:1px;height:234px;background:repeating-linear-gradient(180deg,#b4b4b4 0 1px,transparent 1px 2px)"></div>
<div style="position:absolute;left:693px;top:337px;width:1px;height:234px;background:repeating-linear-gradient(180deg,#b4b4b4 0 1px,transparent 1px 2px)"></div>
<div style="position:absolute;left:813px;top:337px;width:1px;height:234px;background:repeating-linear-gradient(180deg,#b4b4b4 0 1px,transparent 1px 2px)"></div>
<div style="position:absolute;left:946px;top:337px;width:1px;height:234px;background:repeating-linear-gradient(180deg,#b4b4b4 0 1px,transparent 1px 2px)"></div>
<div style="position:absolute;left:1067px;top:337px;width:1px;height:234px;background:repeating-linear-gradient(180deg,#b4b4b4 0 1px,transparent 1px 2px)"></div>
<div style="position:absolute;left:1187px;top:337px;width:1px;height:234px;background:repeating-linear-gradient(180deg,#b4b4b4 0 1px,transparent 1px 2px)"></div>
<div style="position:absolute;left:1308px;top:337px;width:1px;height:234px;background:repeating-linear-gradient(180deg,#b4b4b4 0 1px,transparent 1px 2px)"></div>
<div style="position:absolute;left:9px;top:571px;width:1346px;height:1px;background:#7fa3d3"></div>
<div style="position:absolute;left:9px;top:572px;width:1346px;height:16px;background:#f0f0f0"></div>
<div style="position:absolute;left:24px;top:572px;width:119px;height:16px;background:#d6d6d6"></div>
<div style="position:absolute;left:24px;top:572px;width:1px;height:16px;background:#7fa3d3"></div>
<div style="position:absolute;left:143px;top:572px;width:1px;height:16px;background:#7fa3d3"></div>
<div style="position:absolute;left:574px;top:572px;width:119px;height:16px;background:#d6d6d6"></div>
<div style="position:absolute;left:573px;top:572px;width:1px;height:16px;background:#7fa3d3"></div>
<div style="position:absolute;left:694px;top:572px;width:119px;height:16px;background:#d6d6d6"></div>
<div style="position:absolute;left:693px;top:572px;width:1px;height:16px;background:#7fa3d3"></div>
<div style="position:absolute;left:814px;top:572px;width:132px;height:16px;background:#d6d6d6"></div>
<div style="position:absolute;left:813px;top:572px;width:1px;height:16px;background:#7fa3d3"></div>
<div style="position:absolute;left:947px;top:572px;width:120px;height:16px;background:#d6d6d6"></div>
<div style="position:absolute;left:946px;top:572px;width:1px;height:16px;background:#7fa3d3"></div>
<div style="position:absolute;left:1068px;top:572px;width:119px;height:16px;background:#d6d6d6"></div>
<div style="position:absolute;left:1067px;top:572px;width:1px;height:16px;background:#7fa3d3"></div>
<div style="position:absolute;left:1188px;top:572px;width:120px;height:16px;background:#d6d6d6"></div>
<div style="position:absolute;left:1187px;top:572px;width:1px;height:16px;background:#7fa3d3"></div>
<div style="position:absolute;left:1309px;top:572px;width:46px;height:16px;background:#d6d6d6"></div>
<div style="position:absolute;left:1308px;top:572px;width:1px;height:16px;background:#7fa3d3"></div>
<div style="position:absolute;left:28px;top:575px;font-size:11px;line-height:11px;height:11px;color:#000;font-weight:normal;white-space:nowrap;">Số dòng = 4</div>
<div style="position:absolute;left:390px;top:575px;width:300px;text-align:right;font-size:11px;line-height:11px;height:11px;color:#000;font-weight:normal;white-space:nowrap;">19.255.363</div>
<div style="position:absolute;left:510px;top:575px;width:300px;text-align:right;font-size:11px;line-height:11px;height:11px;color:#000;font-weight:normal;white-space:nowrap;">700.000</div>
<div style="position:absolute;left:643px;top:575px;width:300px;text-align:right;font-size:11px;line-height:11px;height:11px;color:#000;font-weight:normal;white-space:nowrap;">5.000.000</div>
<div style="position:absolute;left:764px;top:575px;width:300px;text-align:right;font-size:11px;line-height:11px;height:11px;color:#000;font-weight:normal;white-space:nowrap;">0</div>
<div style="position:absolute;left:884px;top:575px;width:300px;text-align:right;font-size:11px;line-height:11px;height:11px;color:#000;font-weight:normal;white-space:nowrap;">0</div>
<div style="position:absolute;left:1005px;top:575px;width:300px;text-align:right;font-size:11px;line-height:11px;height:11px;color:#000;font-weight:normal;white-space:nowrap;">8.000.000</div>
<div style="position:absolute;left:9px;top:588px;width:1346px;height:1px;background:#7fa3d3"></div>
<div style="position:absolute;left:9px;top:589px;width:1346px;height:17px;background:#adc8e6"></div>
<div style="position:absolute;left:977px;top:589px;width:361px;height:17px;background:#d6d6d6"></div>
<svg style="position:absolute;left:14px;top:593px" width="6" height="9"><polygon points="5,0 5,8 1,4" fill="#000"/></svg>
<svg style="position:absolute;left:1344px;top:593px" width="6" height="9"><polygon points="1,0 1,8 5,4" fill="#000"/></svg>
<div style="position:absolute;left:9px;top:606px;width:1346px;height:1px;background:#7fa3d3"></div>
<svg style="position:absolute;left:16px;top:614px" width="32" height="31"><defs><linearGradient id="wg" x1="0" y1="0" x2="0" y2="1"><stop offset="0" stop-color="#fff8b0"/><stop offset="0.5" stop-color="#ffe14a"/><stop offset="1" stop-color="#f5c400"/></linearGradient></defs><path d="M16 1.5 L30.5 29.5 H1.5 Z" fill="url(#wg)" stroke="#d9a800" stroke-width="1" stroke-linejoin="round"/><path d="M13.6 9 H18.4 L17.3 20.5 H14.7 Z" fill="#222"/><circle cx="16" cy="24.3" r="2.2" fill="#222"/></svg>
<div style="position:absolute;left:61px;top:626px;font-size:11px;line-height:11px;height:11px;color:#000;font-weight:normal;white-space:nowrap;">Để tính giá vốn của thành phẩm bạn phải cập nhật giá nhập kho và giá xuất kho cho các thành phẩm này.</div>
<div style="position:absolute;left:17px;top:655px;width:130px;height:23px;background:#adc8e6;border:1px solid #86a9d6"></div>
<div style="position:absolute;left:27px;top:662px;font-size:11px;line-height:11px;height:11px;color:#000;font-weight:normal;white-space:nowrap;">Cập nhật giá nhập kho</div>
<div style="position:absolute;left:153px;top:655px;width:130px;height:23px;background:#adc8e6;border:1px solid #86a9d6"></div>
<div style="position:absolute;left:165px;top:662px;font-size:11px;line-height:11px;height:11px;color:#000;font-weight:normal;white-space:nowrap;">Cập nhật giá xuất kho</div>
<div style="position:absolute;left:8px;top:694px;width:75px;height:25px;background:#adc8e6;border:1px solid #86a9d6"></div>
<div style="position:absolute;left:42px;top:702px;font-size:11px;line-height:11px;height:11px;color:#000;font-weight:normal;white-space:nowrap;">Giúp</div>
<svg style="position:absolute;left:11px;top:697px" width="17" height="17"><defs><linearGradient id="hg" x1="0" y1="0" x2="0" y2="1"><stop offset="0" stop-color="#c0e0ff"/><stop offset="1" stop-color="#3a88e0"/></linearGradient></defs><circle cx="8.5" cy="8.4" r="7" fill="url(#hg)" stroke="#0c58b8" stroke-width="1.1"/><path d="M5.8 6.2 Q5.8 3.6 8.6 3.6 Q11.4 3.6 11.4 6 Q11.4 7.4 9.8 8.2 Q8.8 8.8 8.8 10" fill="none" stroke="#fff" stroke-width="1.9"/><rect x="7.7" y="11.2" width="2.2" height="2" fill="#fff"/></svg>
<div style="position:absolute;left:1090px;top:694px;width:75px;height:25px;background:#adc8e6;border:1px solid #86a9d6"></div>
<div style="position:absolute;left:1115px;top:702px;font-size:11px;line-height:11px;height:11px;color:#000;font-weight:normal;white-space:nowrap;">Quay lại</div>
<svg style="position:absolute;left:1092px;top:697px" width="20" height="17"><path d="M9.9 2.3 L3.2 8.4 L9.9 14.7 M3.2 8.4 H15.8" fill="none" stroke="#1a8a10" stroke-width="4.4" stroke-linecap="round" stroke-linejoin="round"/><path d="M9.9 2.3 L3.2 8.4 L9.9 14.7 M3.2 8.4 H15.8" fill="none" stroke="#46d02e" stroke-width="2.6" stroke-linecap="round" stroke-linejoin="round"/><path d="M9 4.2 L5 8 H14" fill="none" stroke="#a8f090" stroke-width="0.8"/></svg>
<div style="position:absolute;left:1170px;top:694px;width:104px;height:25px;background:#adc8e6;border:1px solid #86a9d6"></div>
<div style="position:absolute;left:1222px;top:702px;font-size:11px;line-height:11px;height:11px;color:#000;font-weight:normal;white-space:nowrap;">Cất</div>
<svg style="position:absolute;left:1175px;top:698px" width="15" height="15"><rect x="0.7" y="0.7" width="13.4" height="13.6" fill="#5a78ee" stroke="#0a1ed0" stroke-width="1.4"/><rect x="5" y="1.2" width="7.5" height="4" fill="#e0ddd6"/><rect x="9.5" y="2" width="2" height="2.4" fill="#2a4ae0"/><rect x="3.2" y="8" width="8.2" height="5.8" fill="#ecebe8"/></svg>
<div style="position:absolute;left:1279px;top:694px;width:75px;height:25px;background:#adc8e6;border:1px solid #86a9d6"></div>
<div style="position:absolute;left:1307px;top:702px;font-size:11px;line-height:11px;height:11px;color:#000;font-weight:normal;white-space:nowrap;">Hủy bỏ</div>
<svg style="position:absolute;left:1282px;top:697px" width="17" height="17"><circle cx="8.5" cy="8.4" r="5.7" fill="none" stroke="#e8141c" stroke-width="3.4"/><path d="M5 12 L12 5" stroke="#e8141c" stroke-width="2.6"/><path d="M4.5 4.5 Q8.5 1.8 12.5 4.5" stroke="#ff9090" stroke-width="0.9" fill="none"/></svg>
<div style="position:absolute;left:0px;top:728px;width:1366px;height:40px;background:linear-gradient(90deg,#072050 0%,#0a2c68 20%,#0b2e6c 45%,#0a2d6a 75%,#092a62 100%)"></div>
<div style="position:absolute;left:0px;top:728px;width:1366px;height:1px;background:#050d20"></div>
<div style="position:absolute;left:0px;top:729px;width:1366px;height:1px;background:#6482b4"></div>
<div style="position:absolute;left:0px;top:730px;width:1366px;height:2px;background:linear-gradient(180deg,#1e4482,#0d3070)"></div>
<div style="position:absolute;left:308px;top:729px;width:58px;height:38px;background:linear-gradient(160deg,#b0bcd4 0%,#5a72a2 30%,#2e4c84 55%,#3a5a92 100%);border:1px solid #b4c4e0;border-radius:3px"></div>
<div style="position:absolute;left:432px;top:729px;width:58px;height:38px;background:linear-gradient(160deg,#d0d8e6 0%,#9aaac6 30%,#7486aa 55%,#8496b8 100%);border:1px solid #e0e8f4;border-radius:3px"></div>
<svg style="position:absolute;left:7px;top:728px" width="40" height="40"><defs><linearGradient id="so" x1="0" y1="0" x2="0" y2="1"><stop offset="0" stop-color="#c8d4e0"/><stop offset="0.42" stop-color="#5a7a98"/><stop offset="0.5" stop-color="#14406e"/><stop offset="0.8" stop-color="#1a6aa8"/><stop offset="1" stop-color="#30d8f8"/></linearGradient></defs><circle cx="20" cy="20" r="18" fill="url(#so)" stroke="#8098b8" stroke-width="1"/><path d="M11 10 Q16 8 21 10 L20 18 Q15 16 10 18 Z" fill="#f0501a"/><path d="M22 11 Q27 13 32 11 L31 20 Q26 22 21 19 Z" fill="#80c030"/><path d="M9.5 19 Q14.5 17 19.5 19 L18.5 28 Q13.5 26 8.5 28 Z" fill="#2aa0e8"/><path d="M21 20 Q26 22 31 20 L30 30 Q25 32 20 29 Z" fill="#fbb820"/></svg>
<svg style="position:absolute;left:73px;top:731px" width="34" height="34"><defs><radialGradient id="ieg" cx="0.5" cy="0.4" r="0.6"><stop offset="0" stop-color="#b8f0ff"/><stop offset="0.7" stop-color="#40b8f0"/><stop offset="1" stop-color="#1a88d0"/></radialGradient></defs><circle cx="16.5" cy="17" r="13.5" fill="url(#ieg)"/><path d="M10 13.5 Q11 8.5 16.5 8.5 Q22 8.5 23 13.5 Z" fill="#0b2a5e"/><path d="M9.5 20 H29.5 V23 Q26 25 21 26.5 Q15 27 12 22 Z" fill="#0b2a5e"/><path d="M3 28.5 Q-1 24 10 13 Q22 1 30 3.5 Q32 7 27 12" fill="none" stroke="#f4bc10" stroke-width="2.4"/></svg>
<svg style="position:absolute;left:136px;top:733px" width="31" height="31"><defs><linearGradient id="rb136" x1="0" y1="0" x2="0" y2="1"><stop offset="0" stop-color="#ffffff"/><stop offset="1" stop-color="#9aa0aa"/></linearGradient></defs><polygon points="6.3,0.2 29.7,6.3 24,29.6 0.3,23.2" fill="url(#rb136)"/><polygon points="13,12 19,13.6 17.4,19.6 11.4,18" fill="#0b2a5e"/></svg>
<svg style="position:absolute;left:508px;top:733px" width="31" height="31"><defs><linearGradient id="rb508" x1="0" y1="0" x2="0" y2="1"><stop offset="0" stop-color="#ffffff"/><stop offset="1" stop-color="#9aa0aa"/></linearGradient></defs><polygon points="6.3,0.2 29.7,6.3 24,29.6 0.3,23.2" fill="url(#rb508)"/><polygon points="13,12 19,13.6 17.4,19.6 11.4,18" fill="#0b2a5e"/></svg>
<svg style="position:absolute;left:196px;top:731px" width="34" height="34"><defs><linearGradient id="eg1" x1="0" y1="0" x2="1" y2="1"><stop offset="0" stop-color="#30b0f0"/><stop offset="1" stop-color="#60e060"/></linearGradient><linearGradient id="eg2" x1="0" y1="0" x2="0" y2="1"><stop offset="0" stop-color="#1890e0"/><stop offset="1" stop-color="#1060b8"/></linearGradient></defs><circle cx="17" cy="17" r="15.7" fill="url(#eg2)"/><path d="M1.5 15 Q4 1.5 17 1.3 Q32 1.5 32.7 16 Q32.5 22 26 22 Q22 22 20.5 19 Q24 14 20 11 Q14 7 7 11 Q3 13 1.5 15Z" fill="url(#eg1)"/><ellipse cx="17" cy="17" rx="4.5" ry="4" fill="#0c2a5c"/><path d="M10 20 Q12 29 22 30 Q28 29 30 25 Q22 28 17 24 Q13 21 13 16 Z" fill="#0d4fa0" opacity="0.8"/></svg>
<svg style="position:absolute;left:260px;top:736px" width="29" height="27"><rect x="6" y="2" width="21" height="23" fill="#a8d8f4"/><rect x="3.5" y="1.5" width="21" height="23" fill="#b8e0f8" stroke="#e0f4ff" stroke-width="0.5"/><rect x="1" y="1" width="21" height="24" fill="#98c8e8"/><circle cx="11.5" cy="12.6" r="8.3" fill="#f07818"/><polygon points="9,8 16.5,12.6 9,17.2" fill="#fff"/></svg>
<svg style="position:absolute;left:322px;top:733px" width="30" height="30"><circle cx="15" cy="15" r="15" fill="#e04a3a"/><path d="M15 15 L28 7.5 A15 15 0 0 1 15 30 Z" fill="#fccb2e"/><path d="M15 15 L15 30 A15 15 0 0 1 2 7.5 Z" fill="#1fa354"/><path d="M15 15 L2 7.5 A15 15 0 0 1 28 7.5 Z" fill="#dc4a38"/><path d="M15 8.5 H28 L22 20 Z" fill="#fccb2e"/><path d="M9 18.5 L2 7.5 L15 8.5 Z" fill="#dc4a38"/><path d="M9 18.5 L22 20 L15 30 A15 15 0 0 1 2 7.5Z" fill="#1fa354" opacity="0"/><circle cx="15" cy="15" r="6.8" fill="#fff"/><circle cx="15" cy="15" r="5.3" fill="#4a88ec"/></svg>
<svg style="position:absolute;left:385px;top:733px" width="29" height="32"><rect x="0.5" y="0.5" width="27" height="22" fill="#0a0a0a"/><rect x="2" y="2" width="24" height="18" fill="#4a9ae8"/><path d="M7 2 Q1 11 7 20 M12 2 Q6 11 12 20" stroke="#102040" stroke-width="1.5" fill="none"/><text x="18.5" y="14" font-family="Liberation Sans" font-size="7" font-weight="bold" fill="#fff" text-anchor="middle">KMP</text><rect x="10" y="22" width="8" height="3" fill="#111"/><ellipse cx="14" cy="27" rx="11" ry="3.5" fill="#0a0a0a"/></svg>
<svg style="position:absolute;left:445px;top:732px" width="34" height="34"><circle cx="16" cy="16" r="15" fill="#1a8ee0"/><path d="M16 1 A15 15 0 0 1 31 16 L24 18 Q24 8 16 8 Z" fill="#22a862"/><path d="M31 16 A15 15 0 0 1 16 31 L17 24 Q24 24 24 18 Z" fill="#e02a2a"/><path d="M1.5 19 Q3 10 12 10 Q18 10 17 17 Q17 24 24 28 Q19 31 14 30.5 Q3 28 1.5 19Z" fill="#f8a818"/><circle cx="16" cy="15" r="5.3" fill="#fff"/><path d="M19.5 18 L25.5 16 L31.5 18 V24 Q31.5 29.5 25.5 32 Q19.5 29.5 19.5 24 Z" fill="#fff" stroke="#707070" stroke-width="0.6"/><path d="M21 19 L25.5 17.6 V24.5 H21 Z" fill="#2a6ad8"/><path d="M25.5 17.6 L30 19 V24.5 H25.5Z" fill="#f8c818"/><path d="M21 24.5 H25.5 V30.3 Q21 28.5 21 24.5Z" fill="#f8c818"/><path d="M25.5 24.5 H30 Q30 28.5 25.5 30.3Z" fill="#2a6ad8"/></svg>
<svg style="position:absolute;left:1212px;top:745px" width="9" height="6"><polygon points="4.5,0.5 8.5,5 0.5,5" fill="#fff"/></svg>
<svg style="position:absolute;left:1233px;top:741px" width="16" height="17"><path d="M2 2.2 H8 V14.6 H1.6 V2.2" fill="#06183c" stroke="#fff" stroke-width="1.3"/><rect x="2.6" y="11.6" width="4.5" height="1.3" fill="#fff"/><rect x="7.6" y="1" width="1.3" height="3.5" fill="#fff"/><rect x="10.4" y="1" width="1.3" height="3.5" fill="#fff"/><rect x="6.2" y="4" width="8" height="1.5" fill="#fff" stroke="#000" stroke-width="0.4"/><path d="M7 5.4 H13.6 V8 Q13.6 10.4 10.3 10.4 Q7 10.4 7 8 Z" fill="#fff"/><rect x="9.4" y="10" width="1.8" height="5.2" fill="#dde"/></svg>
<svg style="position:absolute;left:1257px;top:741px" width="16" height="16"><path d="M1 5 H3 L7.3 1 V15 L3 11 H1 Z" fill="#fff" stroke="#000" stroke-width="0.5"/><path d="M9.6 5.4 Q10.8 8 9.6 10.6" stroke="#fff" stroke-width="1.1" fill="none"/><path d="M11.8 3.4 Q14 8 11.8 12.6" stroke="#fff" stroke-width="1.1" fill="none"/></svg>
<div style="position:absolute;left:1280px;top:735px;width:70px;text-align:center;font-size:12px;line-height:12px;height:12px;color:#fff;font-weight:normal;white-space:nowrap;">8:37 AM</div>
<div style="position:absolute;left:1280px;top:751px;width:70px;text-align:center;font-size:12px;line-height:12px;height:12px;color:#fff;font-weight:normal;white-space:nowrap;">6/18/2020</div>
<div style="position:absolute;left:1352px;top:729px;width:14px;height:39px;background:linear-gradient(160deg,#6a86b0 0%,#1e3a6c 40%,#0e2a5a 100%);border-left:1px solid #9ab0d0;border-top:1px solid #9ab0d0"></div>
<div style="position:absolute;left:203px;top:-6px;width:96px;height:65px;border:1px solid rgba(120,120,120,0.9);border-radius:5px"></div>
<div style="position:absolute;left:207px;top:-6px;width:88px;height:61px;border:1px solid rgba(240,245,252,0.85);border-radius:4px"></div>
<div style="position:absolute;left:208px;top:-6px;width:86px;height:28px;background:linear-gradient(180deg,rgba(64,60,58,0.8) 0%,rgba(60,57,55,0.8) 40%,rgba(52,50,49,0.8) 100%)"></div>
<div style="position:absolute;left:208px;top:22px;width:86px;height:32px;background:rgba(49,48,45,0.8);border-radius:0 0 3px 3px"></div>
<div style="position:absolute;left:208px;top:7px;width:86px;text-align:center;font-size:10.5px;line-height:10.5px;height:10.5px;color:#fff;font-weight:normal;white-space:nowrap;">Esc</div>
<svg style="position:absolute;left:234px;top:31px" width="36" height="18"><path d="M1.5 6.5 H4 L9.5 2 V15.5 L4 11 H1.5 Z" stroke="#e8eef4" stroke-width="1.2" fill="none" stroke-linejoin="round"/><path d="M11.5 6 Q13 8.7 11.5 11.5 M13.5 5 Q15.5 8.7 13.5 12.5" stroke="#dde4ec" stroke-width="1" fill="none"/><path d="M23 1.5 L16 16" stroke="#dde4ec" stroke-width="1"/><path d="M23.5 6.5 H26 L31.5 2 V15.5 L26 11 H23.5 Z" stroke="#e8eef4" stroke-width="1.2" fill="none" stroke-linejoin="round"/></svg>
<div style="position:absolute;left:188px;top:65px;width:126px;text-align:center;font-size:11px;line-height:11px;height:11px;color:#fff;font-weight:normal;white-space:nowrap;-webkit-text-stroke:0.35px #fff;text-shadow:1px 0 0 #000,-1px 0 0 #000,0 1px 0 #000,0 -1px 0 #000,1px 1px 0 #000,-1px -1px 0 #000,1px -1px 0 #000,-1px 1px 0 #000">Mute</div>
<div style="position:absolute;left:299px;top:-6px;width:96px;height:65px;border:1px solid rgba(120,120,120,0.9);border-radius:5px"></div>
<div style="position:absolute;left:303px;top:-6px;width:88px;height:61px;border:1px solid rgba(240,245,252,0.85);border-radius:4px"></div>
<div style="position:absolute;left:304px;top:-6px;width:86px;height:28px;background:linear-gradient(180deg,rgba(64,60,58,0.8) 0%,rgba(60,57,55,0.8) 40%,rgba(52,50,49,0.8) 100%)"></div>
<div style="position:absolute;left:304px;top:22px;width:86px;height:32px;background:rgba(49,48,45,0.8);border-radius:0 0 3px 3px"></div>
<div style="position:absolute;left:304px;top:7px;width:86px;text-align:center;font-size:10.5px;line-height:10.5px;height:10.5px;color:#fff;font-weight:normal;white-space:nowrap;">F1</div>
<svg style="position:absolute;left:339px;top:30px" width="17" height="21"><path d="M4.5 9 V5.5 A4 4 0 0 1 12.5 5.5 V9" stroke="#eef4fa" stroke-width="1.6" fill="none"/><rect x="1" y="9" width="15" height="10.5" fill="#e6f0f8"/></svg>
<div style="position:absolute;left:284px;top:65px;width:126px;text-align:center;font-size:11px;line-height:11px;height:11px;color:#fff;font-weight:normal;white-space:nowrap;-webkit-text-stroke:0.35px #fff;text-shadow:1px 0 0 #000,-1px 0 0 #000,0 1px 0 #000,0 -1px 0 #000,1px 1px 0 #000,-1px -1px 0 #000,1px -1px 0 #000,-1px 1px 0 #000">Lock</div>
<div style="position:absolute;left:395px;top:-6px;width:96px;height:65px;border:1px solid rgba(120,120,120,0.9);border-radius:5px"></div>
<div style="position:absolute;left:399px;top:-6px;width:88px;height:61px;border:1px solid rgba(240,245,252,0.85);border-radius:4px"></div>
<div style="position:absolute;left:400px;top:-6px;width:86px;height:28px;background:linear-gradient(180deg,rgba(64,60,58,0.8) 0%,rgba(60,57,55,0.8) 40%,rgba(52,50,49,0.8) 100%)"></div>
<div style="position:absolute;left:400px;top:22px;width:86px;height:32px;background:rgba(49,48,45,0.8);border-radius:0 0 3px 3px"></div>
<div style="position:absolute;left:400px;top:7px;width:86px;text-align:center;font-size:10.5px;line-height:10.5px;height:10.5px;color:#fff;font-weight:normal;white-space:nowrap;">F2</div>
<svg style="position:absolute;left:433px;top:31px" width="18" height="18"><circle cx="8" cy="7.5" r="6" fill="#e8f0f8"/><path d="M11 12 L15.5 16.5" stroke="#dfe6ee" stroke-width="3" stroke-dasharray="1 1"/></svg>
<div style="position:absolute;left:380px;top:65px;width:126px;text-align:center;font-size:11px;line-height:11px;height:11px;color:#fff;font-weight:normal;white-space:nowrap;-webkit-text-stroke:0.35px #fff;text-shadow:1px 0 0 #000,-1px 0 0 #000,0 1px 0 #000,0 -1px 0 #000,1px 1px 0 #000,-1px -1px 0 #000,1px -1px 0 #000,-1px 1px 0 #000">Power Plan</div>
<div style="position:absolute;left:491px;top:-6px;width:96px;height:65px;border:1px solid rgba(120,120,120,0.9);border-radius:5px"></div>
<div style="position:absolute;left:495px;top:-6px;width:88px;height:61px;border:1px solid rgba(240,245,252,0.85);border-radius:4px"></div>
<div style="position:absolute;left:496px;top:-6px;width:86px;height:28px;background:linear-gradient(180deg,rgba(64,60,58,0.8) 0%,rgba(60,57,55,0.8) 40%,rgba(52,50,49,0.8) 100%)"></div>
<div style="position:absolute;left:496px;top:22px;width:86px;height:32px;background:rgba(49,48,45,0.8);border-radius:0 0 3px 3px"></div>
<div style="position:absolute;left:496px;top:7px;width:86px;text-align:center;font-size:10.5px;line-height:10.5px;height:10.5px;color:#fff;font-weight:normal;white-space:nowrap;">F3</div>
<svg style="position:absolute;left:524px;top:32px" width="32" height="15"><path d="M1 8 H13.5 M9 3.5 L13.5 8 L9 12.5" stroke="#eef2f6" stroke-width="1.1" fill="none"/><rect x="14.5" y="3.5" width="15" height="9" stroke="#f0f4f8" stroke-width="1.4" fill="none"/><path d="M17 1 V3.5 M20.5 1 V3.5 M24 1 V3.5 M27.5 1 V3.5 M17 12.5 V15 M20.5 12.5 V15 M24 12.5 V15 M27.5 12.5 V15" stroke="#f0f4f8" stroke-width="1.6"/></svg>
<div style="position:absolute;left:476px;top:65px;width:126px;text-align:center;font-size:11px;line-height:11px;height:11px;color:#fff;font-weight:normal;white-space:nowrap;-webkit-text-stroke:0.35px #fff;text-shadow:1px 0 0 #000,-1px 0 0 #000,0 1px 0 #000,0 -1px 0 #000,1px 1px 0 #000,-1px -1px 0 #000,1px -1px 0 #000,-1px 1px 0 #000">Sleep</div>
<div style="position:absolute;left:587px;top:-6px;width:96px;height:65px;border:1px solid rgba(120,120,120,0.9);border-radius:5px"></div>
<div style="position:absolute;left:591px;top:-6px;width:88px;height:61px;border:1px solid rgba(240,245,252,0.85);border-radius:4px"></div>
<div style="position:absolute;left:592px;top:-6px;width:86px;height:28px;background:linear-gradient(180deg,rgba(64,60,58,0.8) 0%,rgba(60,57,55,0.8) 40%,rgba(52,50,49,0.8) 100%)"></div>
<div style="position:absolute;left:592px;top:22px;width:86px;height:32px;background:rgba(49,48,45,0.8);border-radius:0 0 3px 3px"></div>
<div style="position:absolute;left:592px;top:7px;width:86px;text-align:center;font-size:10.5px;line-height:10.5px;height:10.5px;color:#fff;font-weight:normal;white-space:nowrap;">F4</div>
<svg style="position:absolute;left:620px;top:32px" width="32" height="17"><path d="M1 8.5 H13 M8.5 4 L13 8.5 L8.5 13" stroke="#eef2f6" stroke-width="1.1" fill="none"/><path d="M14.5 4.5 A7.5 3 0 0 1 29.5 4.5 V13 A7.5 3 0 0 1 14.5 13 Z" stroke="#eef2f6" stroke-width="1.1" fill="none"/><path d="M14.5 5 A7.5 3 0 0 0 29.5 5" stroke="#eef2f6" stroke-width="1.1" fill="none"/></svg>
<div style="position:absolute;left:572px;top:65px;width:126px;text-align:center;font-size:11px;line-height:11px;height:11px;color:#fff;font-weight:normal;white-space:nowrap;-webkit-text-stroke:0.35px #fff;text-shadow:1px 0 0 #000,-1px 0 0 #000,0 1px 0 #000,0 -1px 0 #000,1px 1px 0 #000,-1px -1px 0 #000,1px -1px 0 #000,-1px 1px 0 #000">Hibernate</div>
<div style="position:absolute;left:683px;top:-6px;width:96px;height:65px;border:1px solid rgba(120,120,120,0.9);border-radius:5px"></div>
<div style="position:absolute;left:687px;top:-6px;width:88px;height:61px;border:1px solid rgba(240,245,252,0.85);border-radius:4px"></div>
<div style="position:absolute;left:688px;top:-6px;width:86px;height:28px;background:linear-gradient(180deg,rgba(64,60,58,0.8) 0%,rgba(60,57,55,0.8) 40%,rgba(52,50,49,0.8) 100%)"></div>
<div style="position:absolute;left:688px;top:22px;width:86px;height:32px;background:rgba(49,48,45,0.8);border-radius:0 0 3px 3px"></div>
<div style="position:absolute;left:688px;top:7px;width:86px;text-align:center;font-size:10.5px;line-height:10.5px;height:10.5px;color:#fff;font-weight:normal;white-space:nowrap;">F5</div>
<svg style="position:absolute;left:709px;top:31px" width="44" height="18"><rect x="2.5" y="1.5" width="11" height="10" stroke="#cfcabc" stroke-width="1.4" fill="none"/><rect x="4.5" y="3.5" width="7" height="5" fill="none" stroke="#e8e6e0" stroke-width="0.8"/><path d="M1 15.5 L2.5 11.5 H13.5 L15 15.5 Z" fill="#cfcabc"/><path d="M22 1 L16.5 15.5" stroke="#e8e6e0" stroke-width="1"/><rect x="23.5" y="2" width="17" height="13.5" rx="3" stroke="#ecebe6" stroke-width="1.2" fill="none"/></svg>
<div style="position:absolute;left:668px;top:65px;width:126px;text-align:center;font-size:11px;line-height:11px;height:11px;color:#fff;font-weight:normal;white-space:nowrap;-webkit-text-stroke:0.35px #fff;text-shadow:1px 0 0 #000,-1px 0 0 #000,0 1px 0 #000,0 -1px 0 #000,1px 1px 0 #000,-1px -1px 0 #000,1px -1px 0 #000,-1px 1px 0 #000">Output</div>
<div style="position:absolute;left:779px;top:-6px;width:96px;height:65px;border:1px solid rgba(120,120,120,0.9);border-radius:5px"></div>
<div style="position:absolute;left:783px;top:-6px;width:88px;height:61px;border:1px solid rgba(240,245,252,0.85);border-radius:4px"></div>
<div style="position:absolute;left:784px;top:-6px;width:86px;height:28px;background:linear-gradient(180deg,rgba(64,60,58,0.8) 0%,rgba(60,57,55,0.8) 40%,rgba(52,50,49,0.8) 100%)"></div>
<div style="position:absolute;left:784px;top:22px;width:86px;height:32px;background:rgba(49,48,45,0.8);border-radius:0 0 3px 3px"></div>
<div style="position:absolute;left:794px;top:7px;width:30px;text-align:center;font-size:10.5px;line-height:10.5px;height:10.5px;color:#fff;font-weight:normal;white-space:nowrap;">F6</div>
<div style="position:absolute;left:830px;top:7px;width:30px;text-align:center;font-size:10.5px;line-height:10.5px;height:10.5px;color:#fff;font-weight:normal;white-space:nowrap;">F7</div>
<svg style="position:absolute;left:817px;top:29px" width="22" height="22"><circle cx="11" cy="10.5" r="5.2" stroke="#f2f2f2" stroke-width="1.3" fill="none"/><path d="M11 1 V4 M11 17 V20 M1.5 10.5 H4.5 M17.5 10.5 H20.5 M4 3.5 L6 5.5 M16 15.5 L18 17.5 M18 3.5 L16 5.5 M6 15.5 L4 17.5" stroke="#f2f2f2" stroke-width="1.3"/></svg>
<div style="position:absolute;left:764px;top:65px;width:126px;text-align:center;font-size:11px;line-height:11px;height:11px;color:#fff;font-weight:normal;white-space:nowrap;-webkit-text-stroke:0.35px #fff;text-shadow:1px 0 0 #000,-1px 0 0 #000,0 1px 0 #000,0 -1px 0 #000,1px 1px 0 #000,-1px -1px 0 #000,1px -1px 0 #000,-1px 1px 0 #000">Brightness</div>
<div style="position:absolute;left:875px;top:-6px;width:96px;height:65px;border:1px solid rgba(120,120,120,0.9);border-radius:5px"></div>
<div style="position:absolute;left:879px;top:-6px;width:88px;height:61px;border:1px solid rgba(240,245,252,0.85);border-radius:4px"></div>
<div style="position:absolute;left:880px;top:-6px;width:86px;height:28px;background:linear-gradient(180deg,rgba(64,60,58,0.8) 0%,rgba(60,57,55,0.8) 40%,rgba(52,50,49,0.8) 100%)"></div>
<div style="position:absolute;left:880px;top:22px;width:86px;height:32px;background:rgba(49,48,45,0.8);border-radius:0 0 3px 3px"></div>
<div style="position:absolute;left:880px;top:7px;width:86px;text-align:center;font-size:10.5px;line-height:10.5px;height:10.5px;color:#fff;font-weight:normal;white-space:nowrap;">F8</div>
<svg style="position:absolute;left:913px;top:30px" width="20" height="21"><circle cx="9.8" cy="7.2" r="2.3" fill="#f6f8fc"/><rect x="8.8" y="7" width="2" height="12.5" fill="#fafafa"/><path d="M6.5 4 Q5 7 6.5 10 M13 4 Q14.5 7 13 10 M4.5 2.5 Q2.5 7 4.5 11.5 M15 2.5 Q17 7 15 11.5 M2.5 1 Q-0.5 7 2.5 13 M17 1 Q20 7 17 13" stroke="#e8e8e8" stroke-width="0.9" fill="none"/></svg>
<div style="position:absolute;left:860px;top:65px;width:126px;text-align:center;font-size:11px;line-height:11px;height:11px;color:#fff;font-weight:normal;white-space:nowrap;-webkit-text-stroke:0.35px #fff;text-shadow:1px 0 0 #000,-1px 0 0 #000,0 1px 0 #000,0 -1px 0 #000,1px 1px 0 #000,-1px -1px 0 #000,1px -1px 0 #000,-1px 1px 0 #000">Wireless</div>
<div style="position:absolute;left:971px;top:-6px;width:96px;height:65px;border:1px solid rgba(120,120,120,0.9);border-radius:5px"></div>
<div style="position:absolute;left:975px;top:-6px;width:88px;height:61px;border:1px solid rgba(240,245,252,0.85);border-radius:4px"></div>
<div style="position:absolute;left:976px;top:-6px;width:86px;height:28px;background:linear-gradient(180deg,rgba(64,60,58,0.8) 0%,rgba(60,57,55,0.8) 40%,rgba(52,50,49,0.8) 100%)"></div>
<div style="position:absolute;left:976px;top:22px;width:86px;height:32px;background:rgba(49,48,45,0.8);border-radius:0 0 3px 3px"></div>
<div style="position:absolute;left:976px;top:7px;width:86px;text-align:center;font-size:10.5px;line-height:10.5px;height:10.5px;color:#fff;font-weight:normal;white-space:nowrap;">F9</div>
<svg style="position:absolute;left:1002px;top:31px" width="36" height="18"><rect x="1.5" y="2.5" width="10.5" height="13.5" rx="2.5" stroke="#c8cacc" stroke-width="1.2" fill="none"/><path d="M1.5 11.5 H12 M6.8 11.5 V16" stroke="#c8cacc" stroke-width="1.2"/><path d="M20 2 L13.5 16" stroke="#c8cacc" stroke-width="1"/><rect x="21" y="3.5" width="11" height="12.5" rx="2.5" stroke="#c8cacc" stroke-width="1.2" fill="none"/><path d="M21 11.5 H32 M26.5 11.5 V16" stroke="#c8cacc" stroke-width="1.2"/><circle cx="25.5" cy="5.8" r="4.4" fill="#505356" stroke="#e8e8e8" stroke-width="1.1"/><path d="M22.5 2.8 L28.5 8.8" stroke="#e8e8e8" stroke-width="1.1"/></svg>
<div style="position:absolute;left:956px;top:65px;width:126px;text-align:center;font-size:11px;line-height:11px;height:11px;color:#fff;font-weight:normal;white-space:nowrap;-webkit-text-stroke:0.35px #fff;text-shadow:1px 0 0 #000,-1px 0 0 #000,0 1px 0 #000,0 -1px 0 #000,1px 1px 0 #000,-1px -1px 0 #000,1px -1px 0 #000,-1px 1px 0 #000">Touch Pad</div>
<div style="position:absolute;left:1067px;top:-6px;width:96px;height:65px;border:1px solid rgba(120,120,120,0.9);border-radius:5px"></div>
<div style="position:absolute;left:1071px;top:-6px;width:88px;height:61px;border:1px solid rgba(240,245,252,0.85);border-radius:4px"></div>
<div style="position:absolute;left:1072px;top:-6px;width:86px;height:28px;background:linear-gradient(180deg,rgba(64,60,58,0.8) 0%,rgba(60,57,55,0.8) 40%,rgba(52,50,49,0.8) 100%)"></div>
<div style="position:absolute;left:1072px;top:22px;width:86px;height:32px;background:rgba(49,48,45,0.8);border-radius:0 0 3px 3px"></div>
<div style="position:absolute;left:1072px;top:7px;width:86px;text-align:center;font-size:10.5px;line-height:10.5px;height:10.5px;color:#fff;font-weight:normal;white-space:nowrap;">SPACE</div>
<svg style="position:absolute;left:1104px;top:30px" width="22" height="22"><path d="M13 16.5 H3.5 Q1.5 16.5 1.5 14.5 V3 Q1.5 1.5 3 1.5 H18.5 Q20 1.5 20 3 V14.5 Q20 16.5 18 16.5" stroke="#f0f0f0" stroke-width="1.2" fill="none"/><circle cx="10.5" cy="8.5" r="5" stroke="#f0f0f0" stroke-width="1.2" fill="#505356"/><path d="M10.5 5.8 V11.2 M7.8 8.5 H13.2" stroke="#f4f4f4" stroke-width="1.8"/><path d="M13.2 12.8 L17 19" stroke="#f0f0f0" stroke-width="1.2"/></svg>
<div style="position:absolute;left:1052px;top:65px;width:126px;text-align:center;font-size:11px;line-height:11px;height:11px;color:#fff;font-weight:normal;white-space:nowrap;-webkit-text-stroke:0.35px #fff;text-shadow:1px 0 0 #000,-1px 0 0 #000,0 1px 0 #000,0 -1px 0 #000,1px 1px 0 #000,-1px -1px 0 #000,1px -1px 0 #000,-1px 1px 0 #000">Zoom</div>
</body></html>
